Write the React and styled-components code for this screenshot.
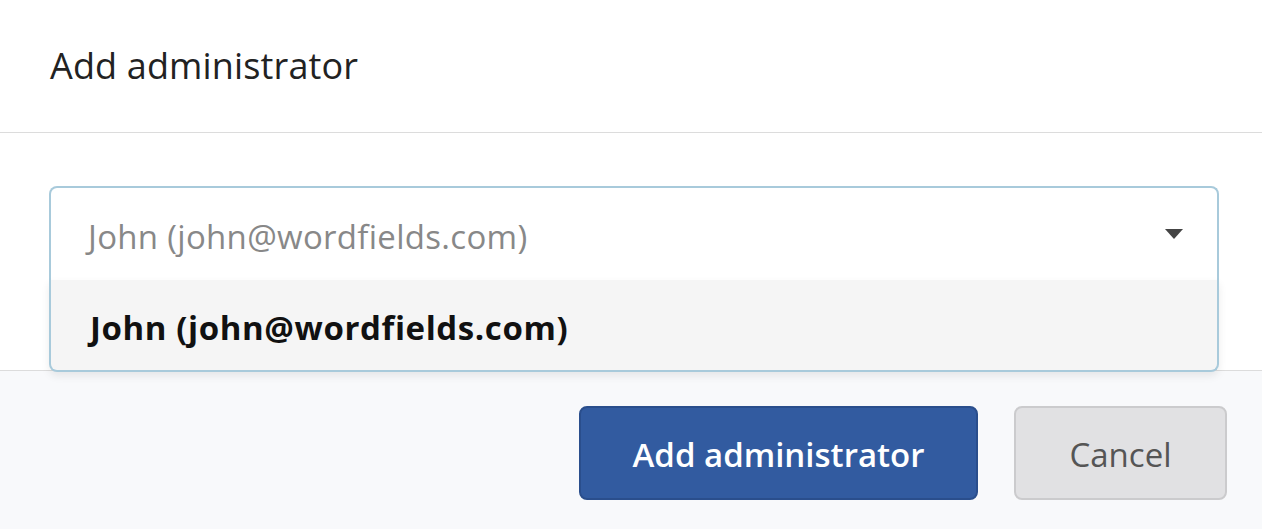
import React from 'react'
import styled, { createGlobalStyle } from 'styled-components'

const GlobalStyle = createGlobalStyle`
  html, body {
    margin: 0;
    padding: 0;
    background: #ffffff;
    font-family: "Open Sans", "Noto Sans", sans-serif;
  }
  * { box-sizing: border-box; }
`;

const Dialog = styled.div`
  width: 100%;
  height: 529px;
  display: flex;
  flex-direction: column;
  overflow: hidden;
`;

const Header = styled.div`
  height: 133px;
  flex-shrink: 0;
  padding: 0 50px;
  display: flex;
  align-items: center;
  border-bottom: 1px solid #dcdcdc;
`;

const Title = styled.h2`
  margin: 0;
  font-size: 36px;
  font-weight: 400;
  letter-spacing: 0.15px;
  color: #222;
  padding-bottom: 2px;
`;

const Body = styled.div`
  height: 237px;
  flex-shrink: 0;
  padding: 53px 43px 0 49px;
  position: relative;
  z-index: 2;
`;

const Select = styled.div`
  position: relative;
`;

const Control = styled.div`
  height: 94px;
  display: flex;
  align-items: center;
  justify-content: space-between;
  padding: 0 34px 0 37px;
  border: 2px solid #a8cadb;
  border-bottom: none;
  border-radius: 8px 8px 0 0;
  background: #fff;
`;

const Placeholder = styled.span`
  font-size: 33px;
  letter-spacing: 0.3px;
  color: #888;
  padding-top: 4px;
`;

const Arrow = styled.svg`
  width: 18px;
  height: 10px;
  display: block;
`;

const Menu = styled.div`
  position: absolute;
  top: 100%;
  left: 0;
  right: 0;
  border: 2px solid #a8cadb;
  border-top: none;
  border-radius: 0 0 8px 8px;
  background: #f5f5f5;
  box-shadow: 0 4px 8px rgba(0, 0, 0, 0.08);
`;

const Option = styled.div`
  height: 90px;
  display: flex;
  align-items: center;
  padding: 4px 0 0 39px;
  font-size: 33px;
  letter-spacing: 0.6px;
  font-weight: 700;
  color: #111;
`;

const Footer = styled.div`
  flex: 1;
  background: #f8f9fb;
  border-top: 1px solid #dcdcdc;
  display: flex;
  justify-content: flex-end;
  align-items: flex-start;
  gap: 36px;
  padding: 35px 35px 0 0;
`;

const Button = styled.button`
  height: 94px;
  width: ${p => p.$width}px;
  border-radius: 8px;
  border: 2px solid ${p => (p.$primary ? '#2a4e8c' : '#cbcbcd')};
  background: ${p => (p.$primary ? '#325ba0' : '#e1e1e3')};
  color: ${p => (p.$primary ? '#ffffff' : '#555555')};
  font-family: "Open Sans", "Noto Sans", sans-serif;
  font-size: 33px;
  font-weight: ${p => (p.$primary ? 600 : 400)};
  padding: 3px 0 0;
  cursor: pointer;
`;

export default function App() {
  return (
    <>
      <GlobalStyle />
      <Dialog>
        <Header>
          <Title>Add administrator</Title>
        </Header>
        <Body>
          <Select>
            <Control>
              <Placeholder>John (john@wordfields.com)</Placeholder>
              <Arrow viewBox="0 0 18 10">
                <path d="M0 0 L18 0 L9 10 Z" fill="#444" />
              </Arrow>
            </Control>
            <Menu>
              <Option>John (john@wordfields.com)</Option>
            </Menu>
          </Select>
        </Body>
        <Footer>
          <Button $primary $width={399}>Add administrator</Button>
          <Button $width={213}>Cancel</Button>
        </Footer>
      </Dialog>
    </>
  )
}
